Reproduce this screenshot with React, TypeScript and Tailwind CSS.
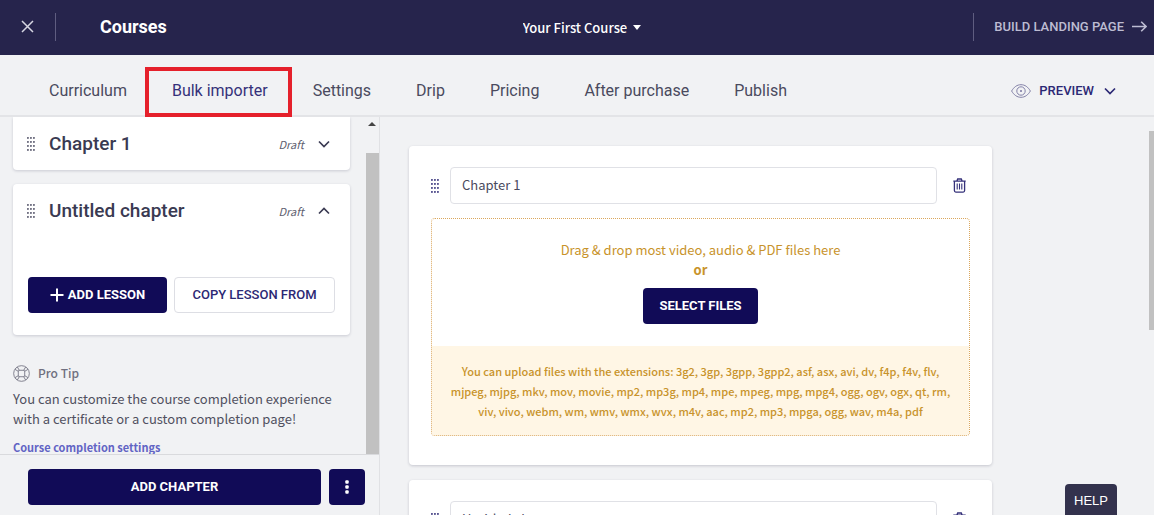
import React from "react";

const heading = "font-['Roboto',sans-serif]";

function Grip({ className }: { className: string }) {
  return (
    <svg aria-hidden="true" width="8" height="14" viewBox="0 0 8 14" className={className} fill="currentColor">
      {[0, 4, 8, 12].map((y) =>
        [0, 3, 6].map((x) => <rect key={`${x}-${y}`} x={x} y={y} width="1.8" height="1.8" rx="0.4" />)
      )}
    </svg>
  );
}

function Chevron({ up = false }: { up?: boolean }) {
  return (
    <svg aria-hidden="true" width="12" height="8" viewBox="0 0 12 8" fill="none" stroke="currentColor" strokeWidth="1.7">
      <path d={up ? "M1 6.5 6 1.5l5 5" : "M1 1.5l5 5 5-5"} />
    </svg>
  );
}

function TrashIcon() {
  return (
    <svg aria-hidden="true" width="13" height="15" viewBox="0 0 13 15" fill="none" stroke="currentColor" strokeWidth="1.3">
      <path d="M0.3 3.2h12.4M3.9 3.1 4.7 1h3.6l.8 2.1M1.4 3.4v9.2c0 .9.5 1.5 1.4 1.5h7.4c.9 0 1.4-.6 1.4-1.5V3.4" />
      <path d="M4.2 5.6v6M6.5 5.6v6M8.8 5.6v6" strokeWidth="1.1" />
    </svg>
  );
}

function EyeIcon() {
  return (
    <svg aria-hidden="true" width="20" height="14" viewBox="0 0 20 14" fill="none" stroke="currentColor" strokeWidth="0.9">
      <path d="M0.6 7C3 3 6 0.7 10 0.7S17 3 19.4 7C17 11 14 13.3 10 13.3S3 11 .6 7z" />
      <circle cx="10" cy="7" r="4.2" />
      <circle cx="10" cy="7" r="1" fill="currentColor" stroke="none" />
    </svg>
  );
}

function LifebuoyIcon() {
  return (
    <svg aria-hidden="true" width="17" height="17" viewBox="0 0 18 18" fill="none" stroke="currentColor" strokeWidth="0.9">
      <circle cx="9" cy="9" r="8.3" />
      <rect x="5.6" y="5.6" width="6.8" height="6.8" rx="1.2" />
      <path d="M2 4.6 5.9 6.8M4.6 2 6.8 5.9M16 4.6l-3.9 2.2M13.4 2l-2.2 3.9M2 13.4l3.9-2.2M4.6 16l2.2-3.9M16 13.4l-3.9-2.2M13.4 16l-2.2-3.9" />
    </svg>
  );
}

const tabs = ["Curriculum", "Bulk importer", "Settings", "Drip", "Pricing", "After purchase", "Publish"];

function TopBar() {
  return (
    <header className="grid h-[55px] shrink-0 grid-cols-[1fr_auto_1fr] items-center bg-[#26244c] text-white">
      <div className="flex items-center pb-[2px]">
        <button type="button" aria-label="Close" className="ml-[21px] text-[#d6d6e2]">
          <svg aria-hidden="true" width="13" height="13" viewBox="0 0 13 13" fill="none" stroke="currentColor" strokeWidth="1.5">
            <path d="M1 1l11 11M12 1 1 12" />
          </svg>
        </button>
        <div className="ml-[21px] h-7 w-px bg-[#5f5d80]" />
        <h1 className={`ml-11 text-[18px] leading-6 font-bold ${heading}`}>Courses</h1>
      </div>
      <div className="flex items-center pl-[10px]">
        <select aria-label="Course" className="field-sizing-content appearance-none bg-transparent text-[13px] leading-5 font-medium">
          <option>Your First Course</option>
        </select>
        <svg aria-hidden="true" width="8" height="5" viewBox="0 0 8 5" className="ml-[6px]" fill="currentColor">
          <path d="M0 0h8L4 5z" />
        </svg>
      </div>
      <div className="flex items-center justify-end pb-[2px]">
        <div className="h-7 w-px bg-[#5f5d80]" />
        <a href="#landing" className={`ml-5 flex items-center gap-2 pr-[7px] text-[13px] leading-5 font-medium text-[#bdbcd2] ${heading}`}>
          BUILD LANDING PAGE
          <svg aria-hidden="true" width="15" height="11" viewBox="0 0 15 11" fill="none" stroke="currentColor" strokeWidth="1.6">
            <path d="M0 5.5h14M9.2.8 14 5.5l-4.8 4.7" />
          </svg>
        </a>
      </div>
    </header>
  );
}

function TabBar() {
  return (
    <nav className={`flex h-[62px] shrink-0 items-center border-b-2 border-[#e3e4e7] pt-3 ${heading}`}>
      <div className="flex gap-[45px] pl-[49px] text-[16px] leading-6 text-[#4a4a5e]">
        {tabs.map((tab) =>
          tab === "Bulk importer" ? (
            <a key={tab} href="#bulk" aria-current="page" className="relative text-[#35317a]">
              {tab}
              <span className="absolute -top-3 -right-6 -bottom-[14px] -left-[27px] z-10 border-4 border-[#e5202b]" />
            </a>
          ) : (
            <a key={tab} href="#tab">{tab}</a>
          )
        )}
      </div>
      <button type="button" className="mr-[38px] ml-auto flex items-center text-[13px] leading-5 font-medium text-[#2c2874]">
        <span className="mr-2 text-[#77759f]"><EyeIcon /></span>
        PREVIEW
        <span className="ml-[10px]"><Chevron /></span>
      </button>
    </nav>
  );
}

function ChapterRow({ title, open = false }: { title: string; open?: boolean }) {
  return (
    <div className="flex items-center text-[#3a3a52]">
      <Grip className="mx-[14px] text-[#55556a]" />
      <h2 className={`text-[19px] leading-7 font-medium ${heading}`}>{title}</h2>
      <span className="mr-[14px] ml-auto text-[11px] leading-5 text-[#606070] italic">Draft</span>
      <button type="button" aria-label={`Toggle ${title}`} className="mr-5"><Chevron up={open} /></button>
    </div>
  );
}

function Sidebar() {
  const solid = "rounded bg-[#110b57] text-white";
  return (
    <aside className="flex w-[380px] shrink-0 flex-col border-r border-[#e0e1e4]">
      <div className="flex min-h-0 flex-1">
        <div className="min-w-0 flex-1 overflow-hidden pr-[15px] pl-[13px]">
          <section className="rounded-b bg-white pt-[13px] pb-3 shadow-[0_1px_3px_rgba(30,30,60,0.18)]">
            <ChapterRow title="Chapter 1" />
          </section>
          <section className="mt-[14px] rounded bg-white pt-[13px] pb-[22px] shadow-[0_1px_3px_rgba(30,30,60,0.18)]">
            <ChapterRow title="Untitled chapter" open />
            <div className={`mt-[52px] flex gap-[7px] px-[15px] text-[13px] font-medium ${heading}`}>
              <button type="button" className={`flex h-9 w-[139px] items-center justify-center gap-1 font-bold ${solid}`}>
                <svg aria-hidden="true" width="14" height="14" viewBox="0 0 14 14" stroke="currentColor" strokeWidth="2">
                  <path d="M7 .5v13M.5 7h13" />
                </svg>
                ADD LESSON
              </button>
              <button type="button" className="h-9 flex-1 rounded border border-[#dddee4] text-[#2c2874]">COPY LESSON FROM</button>
            </div>
          </section>
          <section className="pt-7">
            <div className="flex items-center gap-2 text-[12px] leading-5 font-medium text-[#707080]">
              <LifebuoyIcon />
              Pro Tip
            </div>
            <p className="mt-[6px] text-[13px] leading-5 text-[#50505f]">
              You can customize the course completion experience with a certificate or a custom completion page!
            </p>
            <a href="#completion" className="mt-2 block text-[11px] leading-5 font-bold text-[#6264c4]">Course completion settings</a>
          </section>
        </div>
        <div className="flex w-[14px] flex-col items-center">
          <svg aria-hidden="true" width="8" height="4" viewBox="0 0 8 4" className="mt-[5px] mb-[27px]" fill="#444">
            <path d="M0 4h8L4 0z" />
          </svg>
          <div className="w-[13px] flex-1 bg-[#c1c1c1]" />
        </div>
      </div>
      <div className={`flex gap-2 border-t border-[#d9dadd] pt-[14px] pr-[14px] pb-[10px] pl-7 text-[13px] font-bold ${heading}`}>
        <button type="button" className={`h-9 flex-1 ${solid}`}>ADD CHAPTER</button>
        <button type="button" aria-label="More actions" className={`flex h-9 w-9 items-center justify-center ${solid}`}>
          <svg aria-hidden="true" width="4" height="14" viewBox="0 0 4 14" fill="currentColor">
            <rect width="3.4" height="3.4" x="0.3" y="0.3" rx="1" />
            <rect width="3.4" height="3.4" x="0.3" y="5.3" rx="1" />
            <rect width="3.4" height="3.4" x="0.3" y="10.3" rx="1" />
          </svg>
        </button>
      </div>
    </aside>
  );
}

function ImportCard({ title, children }: { title: string; children?: React.ReactNode }) {
  return (
    <section className="shrink-0 rounded bg-white px-[22px] pt-[21px] pb-[29px] shadow-[0_1px_3px_rgba(30,30,60,0.2)]">
      <div className="flex items-center text-[#35317a]">
        <Grip className="mr-[11px]" />
        <input
          aria-label="Chapter title"
          defaultValue={title}
          className="h-[37px] min-w-0 flex-1 rounded border border-[#e0e1e6] px-[11px] pb-[2px] text-[13px] text-[#4a4a5e]"
        />
        <button type="button" aria-label="Delete chapter" className="mr-[4px] ml-4"><TrashIcon /></button>
      </div>
      {children}
    </section>
  );
}

function Importer() {
  return (
    <main className="relative flex min-w-0 flex-1">
      <div className="flex min-w-0 flex-1 flex-col gap-[15px] overflow-hidden pt-[29px] pr-[157px] pl-[29px]">
        <ImportCard title="Chapter 1">
          <div className="mt-[14px] overflow-hidden rounded border border-dotted border-[#dba75c] text-center text-[#c8932b]">
            <div className="flex flex-col items-center pt-[21px] pb-[22px] text-[13px] leading-5">
              <p>Drag &amp; drop most video, audio &amp; PDF files here</p>
              <p className="font-bold">or</p>
              <button type="button" className={`mt-2 h-9 rounded bg-[#110b57] px-4 text-[13px] font-bold text-white ${heading}`}>
                SELECT FILES
              </button>
            </div>
            <p className="bg-[#fff6e5] px-3 pt-[15px] pb-[14px] text-[11px] leading-5 font-medium">
              You can upload files with the extensions: 3g2, 3gp, 3gpp, 3gpp2, asf, asx, avi, dv, f4p, f4v, flv, mjpeg, mjpg,
              mkv, mov, movie, mp2, mp3g, mp4, mpe, mpeg, mpg, mpg4, ogg, ogv, ogx, qt, rm, viv, vivo, webm, wm, wmv, wmx,
              wvx, m4v, aac, mp2, mp3, mpga, ogg, wav, m4a, pdf
            </p>
          </div>
        </ImportCard>
        <ImportCard title="Untitled chapter" />
      </div>
      <div className="flex w-[5px] flex-col pt-[14px]">
        <div className="h-[199px] bg-[#c1c1c1]" />
      </div>
      <button
        type="button"
        className="absolute right-[37px] bottom-0 h-[31px] rounded-t bg-[#33324d] px-[9px] pt-[3px] font-['Liberation_Sans',sans-serif] text-[13px] text-white"
      >
        HELP
      </button>
    </main>
  );
}

export default function App() {
  return (
    <div className="flex h-screen flex-col overflow-hidden bg-[#f1f2f4] font-['Noto_Sans_CJK_SC',sans-serif]">
      <TopBar />
      <TabBar />
      <div className="flex min-h-0 flex-1">
        <Sidebar />
        <Importer />
      </div>
    </div>
  );
}
